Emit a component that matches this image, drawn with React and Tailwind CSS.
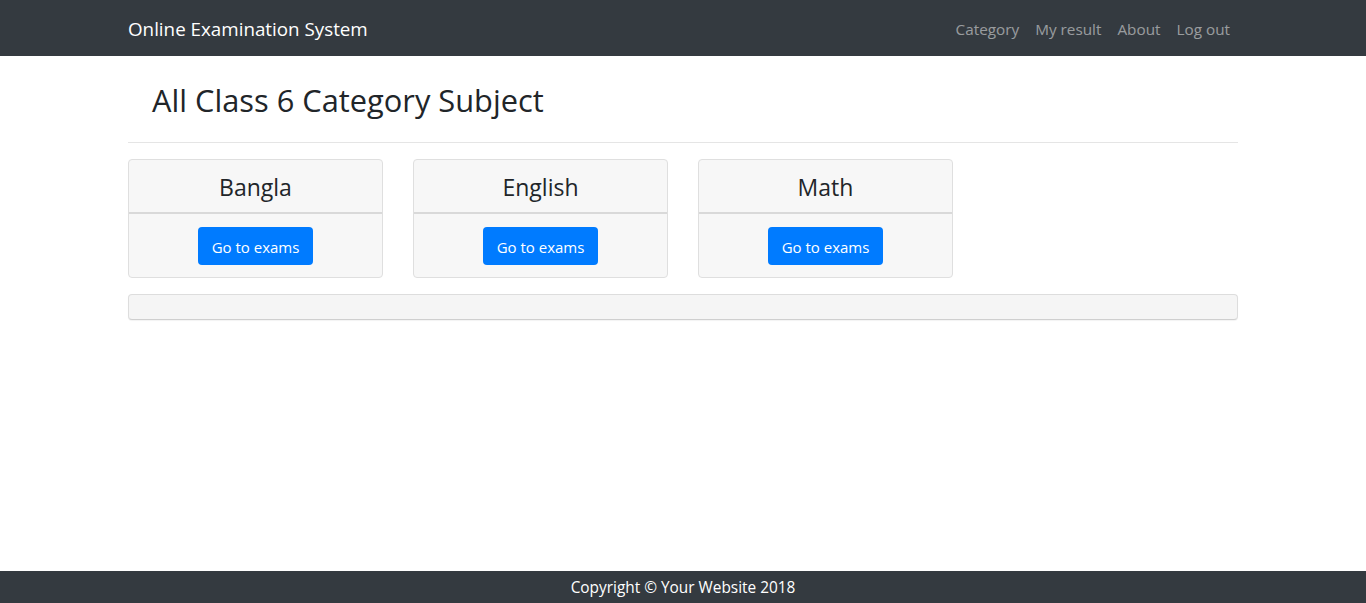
import React from 'react';

const subjects = ['Bangla', 'English', 'Math'];
const links = ['Category', 'My result', 'About', 'Log out'];

export default function App() {
  return (
    <div className="min-h-screen bg-white text-[#212529] font-['Open_Sans',sans-serif]">
      <nav className="h-14 bg-[#343a40]">
        <div className="mx-auto flex h-full max-w-[1140px] items-center justify-between px-[15px] pt-[2px]">
          <a className="text-[18.8px] text-white">Online Examination System</a>
          <ul className="flex">
            {links.map((l) => (
              <li key={l}>
                <a className="block px-2 text-[15.3px] text-white/50">{l}</a>
              </li>
            ))}
          </ul>
        </div>
      </nav>

      <main className="mx-auto max-w-[1140px] px-[15px]">
        <h2 className="pl-6 pt-[25px] pb-[23px] text-[30.8px] leading-[38px]">All Class 6 Category Subject</h2>
        <hr className="border-[#e5e5e5]" />

        <div className="mt-4 grid grid-cols-4 gap-[30px]">
          {subjects.map((s) => (
            <div key={s} className="overflow-hidden rounded border border-[#dfdfdf] bg-[#f7f7f7]">
              <div className="flex h-[54px] items-center justify-center border-b-2 border-[#d9d9d9] pt-[2px]">
                <h4 className="text-[23px]">{s}</h4>
              </div>
              <div className="flex justify-center pt-[13px] pb-[12px]">
                <button className="h-[38px] rounded bg-[#007bff] px-[14px] pt-[3px] text-[15px] text-white">Go to exams</button>
              </div>
            </div>
          ))}
        </div>

        <div className="mt-4 h-[26px] rounded border border-[#dddddd] border-b-[#cfcfcf] bg-[#f5f5f5] shadow-[0_1px_1px_rgba(0,0,0,0.05)]" />
      </main>

      <footer className="fixed inset-x-0 bottom-0 flex h-8 items-center justify-center bg-[#343a40] pt-[2px] text-[15.4px] text-white">
        Copyright © Your Website 2018
      </footer>
    </div>
  );
}
